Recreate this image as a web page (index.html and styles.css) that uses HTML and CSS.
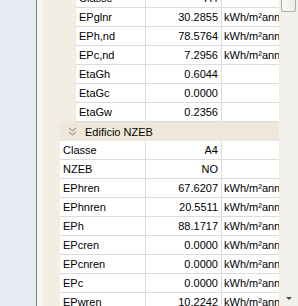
FILE: index.html
```html
<!DOCTYPE html>
<html>
<head>
<meta charset="utf-8">
<link rel="stylesheet" href="styles.css">
</head>
<body>
<div class="frame">
  <div class="side"></div>
  <div class="sep"></div>
  <div class="strip"></div>
  <div class="grid">
    <div class="scroller">
      <div class="group g1">
        <div class="row"><div class="name">Classe</div><div class="val">A4</div><div class="unit"></div></div>
        <div class="row"><div class="name">EPglnr</div><div class="val">30.2855</div><div class="unit">kWh/m²anno</div></div>
        <div class="row"><div class="name">EPh,nd</div><div class="val">78.5764</div><div class="unit">kWh/m²anno</div></div>
        <div class="row"><div class="name">EPc,nd</div><div class="val">7.2956</div><div class="unit">kWh/m²anno</div></div>
        <div class="row"><div class="name">EtaGh</div><div class="val">0.6044</div><div class="unit"></div></div>
        <div class="row"><div class="name">EtaGc</div><div class="val">0.0000</div><div class="unit"></div></div>
        <div class="row"><div class="name">EtaGw</div><div class="val">0.2356</div><div class="unit"></div></div>
      </div>
      <div class="group g2">
        <div class="head">
          <svg class="chev" width="9" height="9" viewBox="0 0 9 9"><path d="M1 1 L4.5 4 L8 1 M1 5 L4.5 8 L8 5" fill="none" stroke="#a8a69c" stroke-width="1.3"/></svg>
          <span>Edificio NZEB</span>
        </div>
        <div class="row"><div class="name">Classe</div><div class="val">A4</div><div class="unit"></div></div>
        <div class="row"><div class="name">NZEB</div><div class="val">NO</div><div class="unit"></div></div>
        <div class="row"><div class="name">EPhren</div><div class="val">67.6207</div><div class="unit">kWh/m²anno</div></div>
        <div class="row"><div class="name">EPhnren</div><div class="val">20.5511</div><div class="unit">kWh/m²anno</div></div>
        <div class="row"><div class="name">EPh</div><div class="val">88.1717</div><div class="unit">kWh/m²anno</div></div>
        <div class="row"><div class="name">EPcren</div><div class="val">0.0000</div><div class="unit">kWh/m²anno</div></div>
        <div class="row"><div class="name">EPcnren</div><div class="val">0.0000</div><div class="unit">kWh/m²anno</div></div>
        <div class="row"><div class="name">EPc</div><div class="val">0.0000</div><div class="unit">kWh/m²anno</div></div>
        <div class="row"><div class="name">EPwren</div><div class="val">10.2242</div><div class="unit">kWh/m²anno</div></div>
      </div>
    </div>
  </div>
  <div class="sbar">
    <div class="thumb"></div>
    <div class="arrow"></div>
  </div>
</div>
</body>
</html>
```

FILE: styles.css
```css
html, body {
  margin: 0;
  padding: 0;
  width: 298px;
  height: 306px;
  overflow: hidden;
  background: #e7eaf3;
}
.frame {
  display: flex;
  width: 298px;
  height: 306px;
  font-family: "Liberation Sans", Arial, sans-serif;
  font-size: 11px;
  color: #000;
}
.side {
  width: 36px;
  background: #e7eaf3;
}
.sep {
  width: 1px;
  background: #7c7c7c;
}
.strip {
  width: 6px;
  background: #f8f7f3;
}
.grid {
  width: 236px;
  background: #f2eee4;
  overflow: hidden;
}
.scroller {
  margin-top: -11px;
}
.group {
  display: flex;
  flex-direction: column;
}
.g1 {
  margin-left: 32px;
}
.g2 {
  margin-left: 17px;
}
.row {
  display: flex;
  height: 18px;
  border-bottom: 1px solid #dddbd5;
  background: #fff;
  line-height: 18px;
}
.name {
  flex: 1;
  padding-left: 3px;
  border-left: 1px solid #ebe9e4;
  border-right: 1px solid #dddbd5;
  white-space: nowrap;
  overflow: hidden;
}
.g2 .name {
  border-left: none;
  padding-left: 3px;
}
.val {
  width: 72px;
  padding-right: 3px;
  text-align: right;
  border-right: 1px solid #dddbd5;
  white-space: nowrap;
}
.unit {
  width: 55px;
  padding-left: 2px;
  white-space: nowrap;
  overflow: hidden;
}
.head {
  display: flex;
  align-items: center;
  height: 19px;
  background: #efe8da;
  padding-left: 8px;
}
.chev {
  margin-right: 8px;
}
.sbar {
  width: 19px;
  background: #f1f0eb;
  display: flex;
  flex-direction: column;
  justify-content: space-between;
  align-items: center;
}
.thumb {
  width: 13px;
  height: 12px;
  margin-top: -1px;
  border: 1px solid #aeaea6;
  border-top: none;
  border-radius: 0 0 3px 3px;
  background: linear-gradient(to right, #fbfbf9, #ecebe6);
}
.arrow {
  width: 0;
  height: 0;
  border-left: 3px solid transparent;
  border-right: 3px solid transparent;
  border-top: 3px solid #4d4d4d;
  margin-bottom: 6px;
}
```
